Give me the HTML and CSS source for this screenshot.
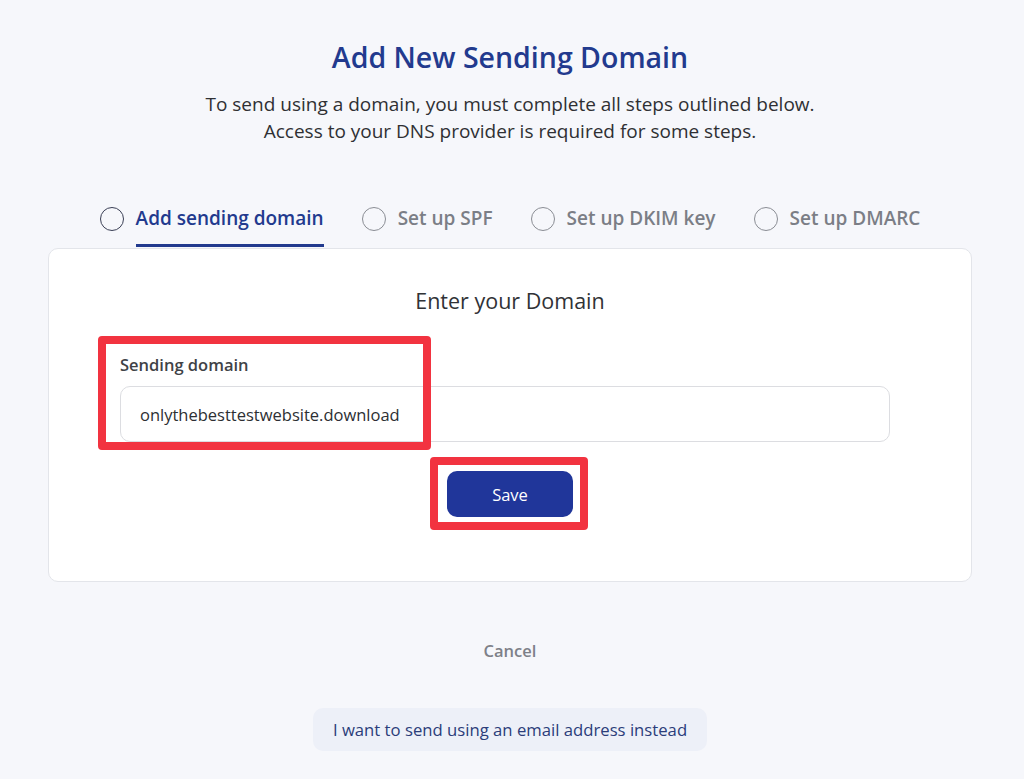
FILE: index.html
```html
<!DOCTYPE html>
<html lang="en">
<head>
    <meta charset="UTF-8">
    <meta name="viewport" content="width=device-width, initial-scale=1.0">
    <title>Add New Sending Domain</title>
    <link rel="stylesheet" href="styles.css">
</head>
<body>

<div class="page">
    <h1>Add New Sending Domain</h1>
    <p class="intro">
        To send using a domain, you must complete all steps outlined below.<br>
        Access to your DNS provider is required for some steps.
    </p>

    <!-- Steps -->
    <ul class="steps">
        <li class="step active"><span class="dot"></span><span class="step-label">Add sending domain</span></li>
        <li class="step"><span class="dot"></span><span class="step-label">Set up SPF</span></li>
        <li class="step"><span class="dot"></span><span class="step-label">Set up DKIM key</span></li>
        <li class="step"><span class="dot"></span><span class="step-label">Set up DMARC</span></li>
    </ul>

    <div class="card">
        <h3>Enter your Domain</h3>
        <form class="domain-form">
            <div class="form-section">
                <label for="domain">Sending domain</label>
                <input type="text" id="domain" name="domain" value="onlythebesttestwebsite.download">
                <span class="mark mark-field"></span>
            </div>
            <div class="actions">
                <button type="submit">Save</button>
                <span class="mark mark-save"></span>
            </div>
        </form>
    </div>

    <a class="cancel" href="#">Cancel</a>

    <div class="alt">
        <a class="alt-link" href="#">I want to send using an email address instead</a>
    </div>
</div>

</body>
</html>
```

FILE: styles.css
```css
body {
    font-family: "Open Sans", "Noto Sans", sans-serif;
    background-color: #f6f7fb;
    margin: 0;
    padding: 0;
    color: #333;
}
.page {
    width: 924px;
    margin: 0 0 0 48px;
    padding-top: 37px;
}
h1 {
    text-align: center;
    font-size: 28.5px;
    font-weight: 600;
    color: #223a8e;
    margin: 0;
    line-height: 40px;
}
.intro {
    text-align: center;
    font-size: 19px;
    line-height: 27px;
    margin: 14px 0 0;
    color: #2f3033;
}
.steps {
    list-style: none;
    display: flex;
    justify-content: center;
    gap: 38px;
    margin: 58px 0 0;
    padding: 0;
}
.step {
    display: flex;
    align-items: flex-start;
    gap: 12px;
    font-size: 19px;
    font-weight: 600;
    color: #7b7e86;
}
.dot {
    width: 22px;
    height: 22px;
    border: 1.5px solid #8a8d94;
    border-radius: 50%;
    margin-top: 4px;
}
.step-label {
    line-height: 30px;
    padding-bottom: 11px;
    border-bottom: 3px solid transparent;
}
.step.active {
    color: #223a8e;
}
.step.active .dot {
    border-color: #3a3f55;
}
.step.active .step-label {
    border-bottom-color: #223a8e;
}
.card {
    background-color: #fff;
    border: 1px solid #e3e5ea;
    border-radius: 10px;
    margin-top: 1px;
    padding: 38px 81px 64px 71px;
}
.card h3 {
    text-align: center;
    font-size: 21.5px;
    font-weight: 400;
    color: #303236;
    margin: 0 0 0 10px;
    line-height: 27px;
}
.domain-form {
    margin-top: 40px;
}
.form-section {
    position: relative;
}
label {
    display: block;
    font-size: 16.5px;
    font-weight: 600;
    color: #404246;
    line-height: 22px;
    margin-bottom: 10px;
}
input[type="text"] {
    display: block;
    width: 100%;
    box-sizing: border-box;
    height: 56px;
    padding: 0 19px;
    border: 1px solid #dcdde1;
    border-radius: 10px;
    font-family: inherit;
    font-size: 16.5px;
    color: #2d2f33;
}
.actions {
    position: relative;
    display: flex;
    justify-content: center;
    margin-top: 29px;
    padding-left: 10px;
}
button {
    width: 126px;
    height: 46px;
    background-color: #20369a;
    color: #fff;
    border: none;
    border-radius: 10px;
    font-family: inherit;
    font-size: 16.5px;
    cursor: pointer;
}

/* red call-out frames drawn over the form */
.mark {
    position: absolute;
    border: 8px solid #f23340;
    border-radius: 4px;
    pointer-events: none;
}
.mark-field {
    left: -22px;
    top: -18px;
    width: 317px;
    height: 98px;
}
.mark-save {
    left: 310px;
    top: -14px;
    width: 142px;
    height: 57px;
}

.cancel {
    display: block;
    text-align: center;
    margin-top: 57px;
    font-size: 16.5px;
    font-weight: 600;
    color: #7d8088;
    text-decoration: none;
    line-height: 24px;
}
.alt {
    display: flex;
    justify-content: center;
    margin-top: 45px;
}
.alt-link {
    display: block;
    background-color: #edf0f8;
    border-radius: 10px;
    padding: 10px 20px;
    font-size: 16.7px;
    line-height: 23px;
    color: #2b3d7a;
    text-decoration: none;
}
```
